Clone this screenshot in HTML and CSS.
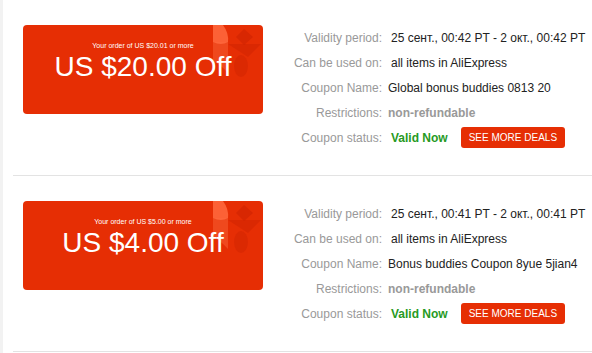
FILE: index.html
```html
<!DOCTYPE html>
<html>
<head>
<meta charset="utf-8">
<link rel="stylesheet" href="styles.css">
</head>
<body>
<div class="list">
  <div class="item">
    <div class="card">
      <svg class="deco" width="50" height="55" viewBox="0 0 50 55">
        <path d="M0 17 H15 V48 Q8 40 0 36 Z" fill="#ff7a50" opacity="0.35"/>
        <path d="M0 0 H10 Q16 8 15 17 Q8 21 0 17 Z" fill="#ff6a3f" opacity="0.85"/>
        <path d="M15 19 L48 19 L35 32 Z" fill="#cc2200" opacity="0.45"/>
        <path d="M31 4 L40 12 L31 20 L23 12 Z" fill="#c92000" opacity="0.5"/>
        <ellipse cx="28" cy="41" rx="7" ry="11" fill="#c51d00" opacity="0.3"/>
      </svg>
      <div class="cond">Your order of US $20.01 or more</div>
      <div class="amount">US $20.00 Off</div>
    </div>
    <div class="details">
      <div class="lbl">Validity period:</div><div class="val pad">25 сент., 00:42 PT - 2 окт., 00:42 PT</div>
      <div class="lbl">Can be used on:</div><div class="val pad">all items in AliExpress</div>
      <div class="lbl">Coupon Name:</div><div class="val">Global bonus buddies 0813 20</div>
      <div class="lbl">Restrictions:</div><div class="val muted">non-refundable</div>
      <div class="lbl">Coupon status:</div><div class="val pad status"><span class="valid">Valid Now</span><span class="btn">SEE MORE DEALS</span></div>
    </div>
  </div>
  <div class="item">
    <div class="card">
      <svg class="deco" width="50" height="55" viewBox="0 0 50 55">
        <path d="M0 17 H15 V48 Q8 40 0 36 Z" fill="#ff7a50" opacity="0.35"/>
        <path d="M0 0 H10 Q16 8 15 17 Q8 21 0 17 Z" fill="#ff6a3f" opacity="0.85"/>
        <path d="M15 19 L48 19 L35 32 Z" fill="#cc2200" opacity="0.45"/>
        <path d="M31 4 L40 12 L31 20 L23 12 Z" fill="#c92000" opacity="0.5"/>
        <ellipse cx="28" cy="41" rx="7" ry="11" fill="#c51d00" opacity="0.3"/>
      </svg>
      <div class="cond">Your order of US $5.00 or more</div>
      <div class="amount">US $4.00 Off</div>
    </div>
    <div class="details">
      <div class="lbl">Validity period:</div><div class="val pad">25 сент., 00:41 PT - 2 окт., 00:41 PT</div>
      <div class="lbl">Can be used on:</div><div class="val pad">all items in AliExpress</div>
      <div class="lbl">Coupon Name:</div><div class="val">Bonus buddies Coupon 8yue 5jian4</div>
      <div class="lbl">Restrictions:</div><div class="val muted">non-refundable</div>
      <div class="lbl">Coupon status:</div><div class="val pad status"><span class="valid">Valid Now</span><span class="btn">SEE MORE DEALS</span></div>
    </div>
  </div>
</div>
</body>
</html>
```

FILE: styles.css
```css
html, body {
  margin: 0;
  padding: 0;
  background: #fff;
}
body {
  border-left: 3px solid #f2f2f2;
  font-family: "Liberation Sans", Arial, sans-serif;
  min-height: 353px;
  box-sizing: border-box;
}
.list {
  margin-left: 10px;
}
.item {
  display: flex;
  align-items: flex-start;
  padding: 25px 0 25px 10px;
  border-bottom: 1px solid #e3e3e3;
}
.card {
  position: relative;
  width: 240px;
  height: 89px;
  background: #e62e04;
  border-radius: 4px;
  color: #fff;
  display: flex;
  flex-direction: column;
  align-items: center;
  padding-top: 17px;
  box-sizing: border-box;
  overflow: hidden;
  flex: none;
}
.deco {
  position: absolute;
  top: 0;
  right: 0;
}
.cond {
  position: relative;
  font-size: 7px;
  line-height: 8px;
}
.amount {
  position: relative;
  font-size: 28px;
  line-height: 32px;
  margin-top: 1px;
}
.details {
  display: grid;
  grid-template-columns: 92px auto;
  grid-auto-rows: 25px;
  column-gap: 6px;
  margin-left: 27px;
  font-size: 12px;
  align-items: center;
}
.lbl {
  color: #999;
  text-align: right;
  white-space: nowrap;
}
.val {
  color: #222;
  white-space: nowrap;
}
.pad {
  padding-left: 3px;
}
.muted {
  color: #999;
  font-weight: bold;
}
.status {
  display: flex;
  align-items: center;
}
.valid {
  color: #279a1f;
  font-weight: bold;
}
.btn {
  margin-left: 13px;
  background: #e62e04;
  color: #fff;
  font-size: 10px;
  height: 21px;
  line-height: 21px;
  padding: 0 8px;
  border-radius: 3px;
}
```
